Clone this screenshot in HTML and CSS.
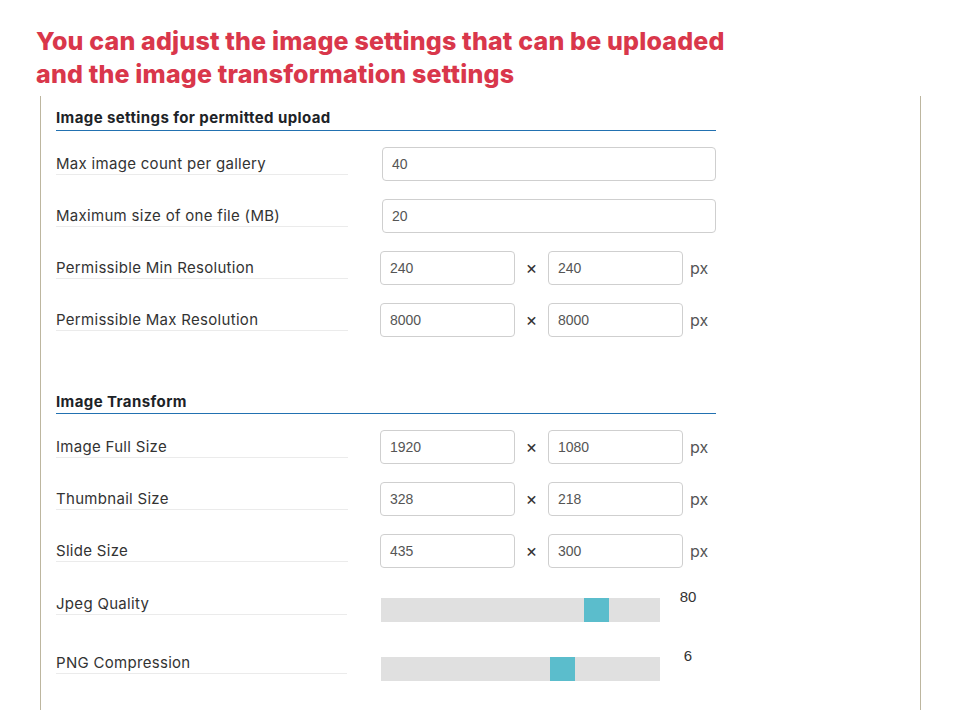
FILE: index.html
```html
<!DOCTYPE html>
<html lang="en">
<head>
<meta charset="utf-8">
<title>Image settings</title>
<link rel="stylesheet" href="styles.css">
</head>
<body>
<h1 class="title">You can adjust the image settings that can be uploaded<br>and the image transformation settings</h1>
<div class="panel">
  <section class="section first">
    <h2 class="section-head">Image settings for permitted upload</h2>
    <div class="row">
      <div class="label">Max image count per gallery</div>
      <div class="field single"><div class="input">40</div></div>
    </div>
    <div class="row">
      <div class="label">Maximum size of one file (MB)</div>
      <div class="field single"><div class="input">20</div></div>
    </div>
    <div class="row">
      <div class="label">Permissible Min Resolution</div>
      <div class="field dual"><div class="input">240</div><span class="times">×</span><div class="input">240</div><span class="unit">px</span></div>
    </div>
    <div class="row">
      <div class="label">Permissible Max Resolution</div>
      <div class="field dual"><div class="input">8000</div><span class="times">×</span><div class="input">8000</div><span class="unit">px</span></div>
    </div>
  </section>
  <section class="section second">
    <h2 class="section-head">Image Transform</h2>
    <div class="row">
      <div class="label">Image Full Size</div>
      <div class="field dual"><div class="input">1920</div><span class="times">×</span><div class="input">1080</div><span class="unit">px</span></div>
    </div>
    <div class="row">
      <div class="label">Thumbnail Size</div>
      <div class="field dual"><div class="input">328</div><span class="times">×</span><div class="input">218</div><span class="unit">px</span></div>
    </div>
    <div class="row">
      <div class="label">Slide Size</div>
      <div class="field dual"><div class="input">435</div><span class="times">×</span><div class="input">300</div><span class="unit">px</span></div>
    </div>
    <div class="row slider-row">
      <div class="label">Jpeg Quality</div>
      <div class="slider"><div class="track"><div class="thumb" style="margin-left:203px"></div></div><span class="value">80</span></div>
    </div>
    <div class="row slider-row">
      <div class="label">PNG Compression</div>
      <div class="slider"><div class="track"><div class="thumb" style="margin-left:169px"></div></div><span class="value">6</span></div>
    </div>
  </section>
</div>
</body>
</html>
```

FILE: styles.css
```css
html, body {
  margin: 0;
  padding: 0;
  background: #ffffff;
}
body {
  font-family: Inter, "Open Sans", sans-serif;
  color: #333333;
}
.title {
  margin: 25px 0 5px 36px;
  font-family: Inter, sans-serif;
  font-weight: 800;
  font-size: 25px;
  line-height: 33px;
  letter-spacing: 0.17px;
  color: #d9374b;
}
.panel {
  margin-left: 40px;
  width: 864px;
  min-height: 620px;
  border-left: 1px solid #bdb69f;
  border-right: 1px solid #bdb69f;
  padding-left: 15px;
}
.section {
  width: 660px;
}
.section.first {
  padding-top: 12px;
}
.section.second {
  margin-top: 46px;
}
.section-head {
  margin: 0;
  font-size: 15px;
  font-weight: 700;
  letter-spacing: 0.4px;
  line-height: 20px;
  color: #1d2327;
  padding-bottom: 2px;
  border-bottom: 1px solid #2271b1;
  margin-bottom: 7px;
}
.second .section-head {
  padding-bottom: 1px;
}
.row {
  display: flex;
  align-items: center;
  height: 52px;
}
.label {
  width: 292px;
  font-size: 15px;
  letter-spacing: 0.3px;
  line-height: 20px;
  color: #333333;
  border-bottom: 1px solid #ebebeb;
}
.field {
  display: flex;
  align-items: center;
}
.field.single {
  margin-left: 34px;
}
.field.single .input {
  width: 332px;
}
.field.dual {
  margin-left: 32px;
}
.field.dual .input {
  width: 133px;
}
.input {
  box-sizing: content-box;
  height: 32px;
  border: 1px solid #cfcfcf;
  border-radius: 4px;
  font-family: "Liberation Sans", Arial, sans-serif;
  font-size: 14px;
  line-height: 32px;
  color: #555555;
  text-indent: 9px;
}
.times {
  width: 33px;
  text-align: center;
  font-size: 18px;
  line-height: 20px;
  color: #333333;
}
.unit {
  margin-left: 7px;
  font-size: 16px;
  color: #555555;
}
.slider-row {
  height: 59px;
  align-items: flex-start;
}
.slider-row .label {
  margin-top: 17px;
}
.slider {
  display: flex;
  align-items: flex-start;
  margin-left: 34px;
}
.track {
  display: flex;
  width: 279px;
  height: 24px;
  margin-top: 21px;
  background: #e0e0e0;
}
.thumb {
  width: 25px;
  height: 24px;
  background: #5bbdcc;
}
.value {
  width: 56px;
  margin-top: 12px;
  text-align: center;
  font-family: "Liberation Sans", Arial, sans-serif;
  font-size: 15px;
  line-height: 16px;
  color: #333333;
}
```
